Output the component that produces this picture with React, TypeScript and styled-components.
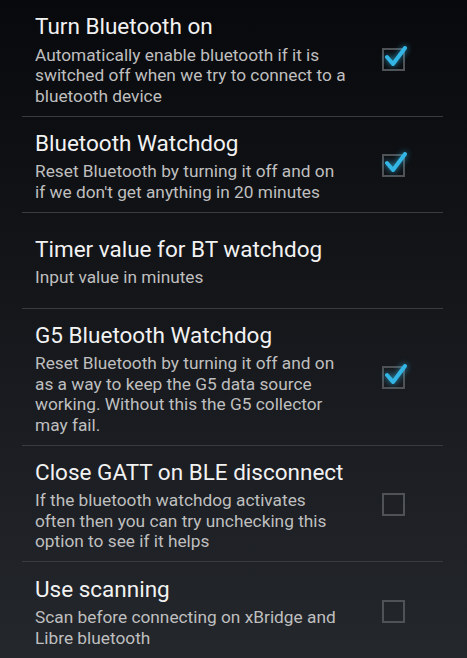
import React from "react";
import styled, { createGlobalStyle } from "styled-components";

const Global = createGlobalStyle`
  html, body { margin: 0; padding: 0; height: 100%; }
  body {
    background: linear-gradient(180deg, #08090c 0%, #14161a 45%, #24272c 100%);
    font-family: Roboto, "Noto Sans", sans-serif;
    -webkit-font-smoothing: antialiased;
  }
`;

const Screen = styled.div`
  width: 467px;
  height: 658px;
  overflow: hidden;
  background: linear-gradient(180deg, #08090c 0%, #14161a 45%, #24272c 100%);
  display: flex;
  flex-direction: column;
`;

const Row = styled.div<{ $last?: boolean }>`
  display: flex;
  align-items: center;
  min-height: 96px;
  box-sizing: border-box;
  margin: 0 24px 0 22px;
  padding: 12px 0 9.5px 13px;
  border-bottom: ${(p) => (p.$last ? "none" : "1px solid #3a3b3e")};
`;

const TextCol = styled.div`
  flex: 1;
  display: flex;
  flex-direction: column;
`;

const Title = styled.div`
  color: #f2f2f2;
  font-size: 22.5px;
  line-height: 28px;
`;

const Summary = styled.div`
  color: #bfbfbf;
  font-size: 17.3px;
  line-height: 20.5px;
  margin-top: 4.5px;
  width: 313px;
`;

const CheckCell = styled.div`
  width: 60px;
  display: flex;
  justify-content: center;
  padding-right: 20px;
`;

const Box = styled.div`
  position: relative;
  width: 23px;
  height: 23px;
  box-sizing: border-box;
  border: 2px solid #4f5256;
`;

const Tick = styled.svg`
  position: absolute;
  left: 0;
  top: -12px;
  width: 26px;
  height: 30px;
  overflow: visible;
  filter: drop-shadow(0 0 3px rgba(51, 181, 229, 0.8));
`;

const Check: React.FC<{ checked: boolean }> = ({ checked }) => (
  <Box>
    {checked && (
      <Tick viewBox="0 0 26 30">
        <path d="M3 19 L9 26 L21 10" fill="none" stroke="#33b5e5" strokeWidth="4" strokeLinecap="round" strokeLinejoin="round" />
      </Tick>
    )}
  </Box>
);

type Pref = { title: string; summary: string; checkbox?: boolean; checked?: boolean };

const prefs: Pref[] = [
  {
    title: "Turn Bluetooth on",
    summary: "Automatically enable bluetooth if it is switched off when we try to connect to a bluetooth device",
    checkbox: true,
    checked: true,
  },
  {
    title: "Bluetooth Watchdog",
    summary: "Reset Bluetooth by turning it off and on if we don't get anything in 20 minutes",
    checkbox: true,
    checked: true,
  },
  { title: "Timer value for BT watchdog", summary: "Input value in minutes" },
  {
    title: "G5 Bluetooth Watchdog",
    summary: "Reset Bluetooth by turning it off and on as a way to keep the G5 data source working. Without this the G5 collector may fail.",
    checkbox: true,
    checked: true,
  },
  {
    title: "Close GATT on BLE disconnect",
    summary: "If the bluetooth watchdog activates often then you can try unchecking this option to see if it helps",
    checkbox: true,
    checked: false,
  },
  {
    title: "Use scanning",
    summary: "Scan before connecting on xBridge and Libre bluetooth",
    checkbox: true,
    checked: false,
  },
];

export default function App() {
  return (
    <>
      <Global />
      <Screen>
        {prefs.map((p, i) => (
          <Row key={i} $last={i === prefs.length - 1}>
            <TextCol>
              <Title>{p.title}</Title>
              <Summary>{p.summary}</Summary>
            </TextCol>
            {p.checkbox && (
              <CheckCell>
                <Check checked={!!p.checked} />
              </CheckCell>
            )}
          </Row>
        ))}
      </Screen>
    </>
  );
}
